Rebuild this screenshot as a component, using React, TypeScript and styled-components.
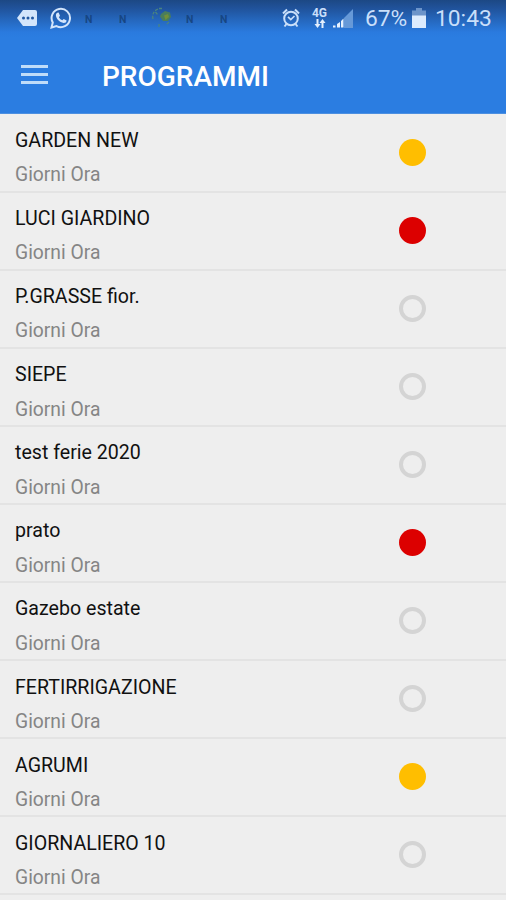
import React from "react";
import styled, { createGlobalStyle } from "styled-components";

const GlobalStyle = createGlobalStyle`
  * { box-sizing: border-box; }
  body { margin: 0; background: #eeeeee; overflow: hidden; }
`;

const Screen = styled.main`
  width: 506px;
  height: 900px;
  overflow: hidden;
  display: flex;
  flex-direction: column;
  background: #eeeeee;
  font-family: Roboto, "Liberation Sans", sans-serif;
`;

const Header = styled.header`
  flex: none;
  height: 114px;
  background: linear-gradient(#1c4884 0, #20529a 8px, #2567bd 20px, #2a7ade 32px, #2b7de1 38px);
  border-bottom: 1px solid #4c8fe0;
`;

const StatusBar = styled.div`
  height: 38px;
  padding: 0 15px 0 17px;
  display: flex;
  justify-content: space-between;
`;

const StatusGroup = styled.div`
  display: flex;
  height: 36px;
  align-items: center;
  color: #c9dffa;
`;

const Icon = styled.svg<{ $gap?: number }>`
  display: block;
  flex: none;
  margin-left: ${(p) => p.$gap ?? 0}px;
`;

const NfcMark = styled.span<{ $gap: number }>`
  width: 8px;
  margin-left: ${(p) => p.$gap}px;
  padding-top: 4px;
  font-size: 10.5px;
  font-weight: 700;
  line-height: 12px;
  color: #174683;
`;

const StatusText = styled.span<{ $gap: number; $width: number }>`
  width: ${(p) => p.$width}px;
  margin-left: ${(p) => p.$gap}px;
  font-size: 22.8px;
  line-height: 38px;
  padding-top: 1px;
  white-space: nowrap;
`;

const Network = styled.span`
  display: flex;
  flex-direction: column;
  align-items: center;
  width: 17px;
  margin-left: 11px;
  font-size: 12px;
  font-weight: 700;
  line-height: 11px;
`;

const Toolbar = styled.div`
  height: 75px;
  display: flex;
  align-items: center;
  padding-left: 21px;
`;

const MenuButton = styled.button`
  display: flex;
  flex-direction: column;
  justify-content: space-between;
  width: 27px;
  height: 19px;
  margin: 0 54px 2px 0;
  padding: 0;
  border: 0;
  background: none;
`;

const MenuLine = styled.span`
  height: 3px;
  background: #bfdcf9;
`;

const Title = styled.h1`
  margin: 2px 0 0;
  color: #fff;
  font-size: 28px;
  line-height: 32px;
  font-weight: 500;
`;

const List = styled.ul`
  margin: 0;
  padding: 1px 0 0;
  list-style: none;
`;

const Row = styled.li`
  height: 78.05px;
  display: flex;
  align-items: center;
  justify-content: space-between;
  padding: 0 80px 1.5px 15px;
  border-bottom: 2px solid #e3e3e3;
`;

const Labels = styled.div`
  display: flex;
  flex-direction: column;
  gap: 10.2px;
  padding-top: 12px;
`;

const Name = styled.span`
  color: #111;
  font-size: 19.6px;
  line-height: 24px;
`;

const Schedule = styled.span`
  color: #858585;
  font-size: 19.3px;
  line-height: 24px;
`;

type State = "waiting" | "stopped" | "off";

const fills: Record<State, string> = {
  waiting: "#ffbe00",
  stopped: "#dc0000",
  off: "transparent",
};

const Dot = styled.span<{ $state: State }>`
  width: 27px;
  height: 27px;
  border-radius: 50%;
  background: ${(p) => fills[p.$state]};
  border: ${(p) => (p.$state === "off" ? "4px solid #d4d4d4" : "0")};
`;

const programs: { name: string; state: State }[] = [
  { name: "GARDEN NEW", state: "waiting" },
  { name: "LUCI GIARDINO", state: "stopped" },
  { name: "P.GRASSE fior.", state: "off" },
  { name: "SIEPE", state: "off" },
  { name: "test ferie 2020", state: "off" },
  { name: "prato", state: "stopped" },
  { name: "Gazebo estate", state: "off" },
  { name: "FERTIRRIGAZIONE", state: "off" },
  { name: "AGRUMI", state: "waiting" },
  { name: "GIORNALIERO 10", state: "off" },
];

const MessageIcon = () => (
  <Icon width="20" height="16" viewBox="0 0 20 16">
    <path d="M6 0H18a2 2 0 0 1 2 2V14a2 2 0 0 1-2 2H6L0 8Z" fill="#d3e5fb" />
    <g fill="#2258a0">
      <circle cx="6.5" cy="8" r="1.5" />
      <circle cx="11" cy="8" r="1.5" />
      <circle cx="15.5" cy="8" r="1.5" />
    </g>
  </Icon>
);

const WhatsAppIcon = () => (
  <Icon $gap={13} width="22" height="22" viewBox="0 0 22 22" fill="none">
    <path d="M1.5 20.5 2.8 15.5A9.2 9.2 0 1 1 6.5 19.1Z" stroke="#d3e5fb" strokeWidth="2" />
    <path
      d="M7.2 5.8 8.6 5.6 10 8.8 8.9 10.2C9.8 11.9 10.8 12.7 12.4 13.3L13.7 12 16.6 13.4C16.5 15.2 15.2 16 13.6 15.9 9.6 15.3 6.3 12 5.9 8.5 5.9 7.2 6.4 6.2 7.2 5.8Z"
      fill="#d3e5fb"
    />
  </Icon>
);

const SprinklerIcon = () => (
  <Icon $gap={25} width="21" height="22" viewBox="0 0 21 22">
    <path d="M13 4 18 5.5 19 10 16 14 11 14 8 9.5 9 7Z" fill="#4a7d5c" />
    <path d="M12 8.5 16 7 17 10 13.5 13Z" fill="#719038" />
    <path
      d="M1 12Q-.5 5 6 2M7 1.5H10M3.5 5 6 8M7 17V20M17 15 14 18"
      fill="none"
      stroke="#4a8480"
      strokeWidth="1.3"
      strokeDasharray="3 1.5"
    />
  </Icon>
);

const AlarmIcon = () => (
  <Icon width="18" height="20" viewBox="0 0 18 20" fill="none" stroke="currentColor">
    <circle cx="9" cy="10.5" r="6.8" strokeWidth="2" />
    <path d="M1 5.5 5 1.5M17 5.5 13 1.5M4.5 16 2.5 18.5M13.5 16 15.5 18.5" strokeWidth="2" />
    <path d="M6 8.8 8.8 11.5 12.5 8" strokeWidth="1.7" />
  </Icon>
);

const DataArrows = () => (
  <Icon width="12" height="9" viewBox="0 0 12 9" fill="#e3effd">
    <path d="M2.5 0H4.5V5H6.5L3.5 9 .5 5H2.5ZM7.5 9H9.5V4H11.5L8.5 0 5.5 4H7.5Z" />
  </Icon>
);

const SignalIcon = () => (
  <Icon $gap={5} width="20" height="20" viewBox="0 0 20 20">
    <path d="M11 10 20 1V20H11Z" fill="#6699d8" />
    <path d="M0 17.5H2.5V19.5H0ZM4 16 7 14V19.5H4ZM8 13 10.5 10.5V19.5H8Z" fill="#e5f1ff" />
  </Icon>
);

const BatteryIcon = () => (
  <Icon $gap={5} width="14" height="21" viewBox="0 0 14 21">
    <path d="M4 0H10V2.5H14V8H0V2.5H4Z" fill="#6c94c9" />
    <path d="M0 7.5H14V20H0Z" fill="#dcebfd" />
  </Icon>
);

export default function App() {
  return (
    <Screen>
      <GlobalStyle />
      <Header>
        <StatusBar>
          <StatusGroup>
            <MessageIcon />
            <WhatsAppIcon />
            <NfcMark $gap={13}>N</NfcMark>
            <NfcMark $gap={26}>N</NfcMark>
            <SprinklerIcon />
            <NfcMark $gap={13}>N</NfcMark>
            <NfcMark $gap={26}>N</NfcMark>
          </StatusGroup>
          <StatusGroup>
            <AlarmIcon />
            <Network>
              4G
              <DataArrows />
            </Network>
            <SignalIcon />
            <StatusText $gap={12} $width={42}>67%</StatusText>
            <BatteryIcon />
            <StatusText $gap={9} $width={56}>10:43</StatusText>
          </StatusGroup>
        </StatusBar>
        <Toolbar>
          <MenuButton aria-label="Menu">
            <MenuLine />
            <MenuLine />
            <MenuLine />
          </MenuButton>
          <Title>PROGRAMMI</Title>
        </Toolbar>
      </Header>
      <List>
        {programs.map((p) => (
          <Row key={p.name}>
            <Labels>
              <Name>{p.name}</Name>
              <Schedule>Giorni Ora</Schedule>
            </Labels>
            <Dot $state={p.state} />
          </Row>
        ))}
      </List>
    </Screen>
  );
}
